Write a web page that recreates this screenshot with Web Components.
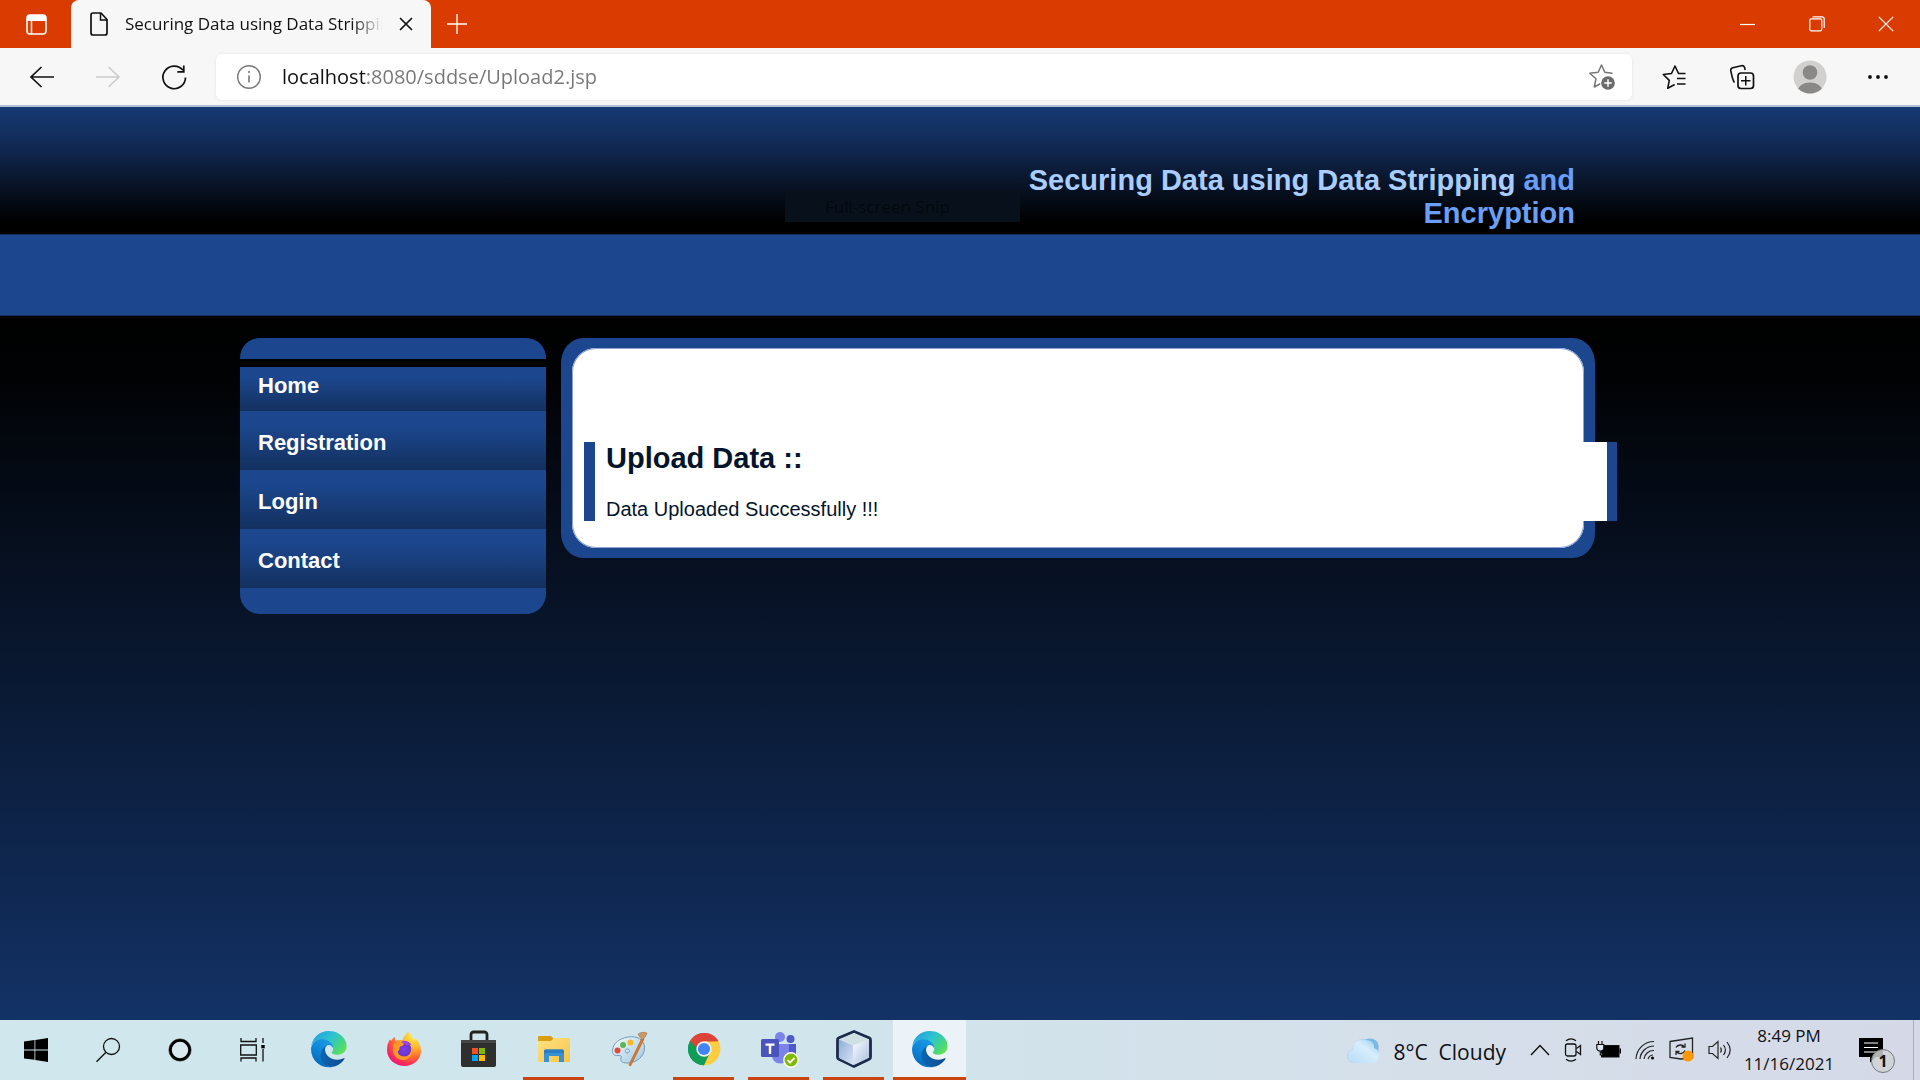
<!DOCTYPE html>
<html lang="en">
<head>
<meta charset="utf-8">
<title>Securing Data using Data Stripping and Encryption</title>
<style>
html,body{height:100%;margin:0}
body{font-family:"Open Sans","Noto Sans",sans-serif;background:#12305f;overflow:hidden}
</style>
</head>
<body>
<desktop-screen></desktop-screen>
<script>
const ICONS = {
  tabs:[24,24,`<rect x="3" y="3" width="19" height="19" rx="3" fill="none" stroke="#fff" stroke-width="1.6"/><path d="M3 9V6a3 3 0 0 1 3-3h13a3 3 0 0 1 3 3v3z" fill="#fff"/><path d="M7.500 9v13" stroke="#fff" stroke-width="1.500"/>`],
  page:[20,26,`<path d="M4 2h8l6 6.500V22a2 2 0 0 1-2 2H4a2 2 0 0 1-2-2V4a2 2 0 0 1 2-2z" fill="none" stroke="#111" stroke-width="1.700" stroke-linejoin="round"/><path d="M11.500 2v7H18" fill="none" stroke="#111" stroke-width="1.500"/>`],
  close:[14,14,`<path d="M1.500 1.500l11 11M12.500 1.500l-11 11" stroke="#111" stroke-width="1.700" stroke-linecap="round"/>`],
  plus:[22,22,`<path d="M11 1v20M1 11h20" stroke="#fff" stroke-width="1.300"/>`],
  min:[16,16,`<path d="M0 8.500h15" stroke="#fff" stroke-width="1.200"/>`],
  restore:[16,16,`<rect x=".8" y="2.800" width="12" height="12" rx="1.500" fill="none" stroke="#fff" stroke-width="1.200"/><path d="M3.500.8h9.500a2.200 2.200 0 0 1 2.200 2.200v9" fill="none" stroke="#fff" stroke-width="1.200"/>`],
  winclose:[16,16,`<path d="M.8.8l14.400 14.400M15.200.8L.8 15.200" stroke="#fff" stroke-width="1.200"/>`],
  back:[26,24,`<path d="M25 12H2M12.500 2L2 12l10.500 10" fill="none" stroke="#111" stroke-width="1.700"/>`],
  forward:[26,24,`<path d="M1 12h23M13.500 2L24 12 13.500 22" fill="none" stroke="#ccc" stroke-width="1.600"/>`],
  reload:[26,26,`<path d="M24.500 13.500A11.300 11.300 0 1 1 22 6.300M22.800 1.500v6.300h-6.500" fill="none" stroke="#111" stroke-width="1.700"/>`],
  info:[26,26,`<circle cx="13" cy="13" r="11.300" fill="none" stroke="#767676" stroke-width="1.400"/><path d="M13 11.500v7" stroke="#767676" stroke-width="1.600"/><circle cx="13" cy="8" r="1.100" fill="#767676"/>`],
  staradd:[28,28,`<path d="M24 10.200l-7.200-1L13.500 2l-3.300 7.200-8.400 1 6.200 5.500-1.700 8.300 5.500-3" fill="none" stroke="#767676" stroke-width="1.500" stroke-linejoin="round" stroke-linecap="round"/><circle cx="20" cy="20" r="6.800" fill="#6b6b6b"/><path d="M20 16.200v7.600M16.200 20h7.600" stroke="#fff" stroke-width="1.500"/>`],
  favs:[26,26,`<path d="M24.500 9.500h-7L14 2l-3.500 7.500-8.200 1 6 5.800-1.600 8 7-3.800" fill="none" stroke="#111" stroke-width="1.600" stroke-linejoin="round"/><path d="M16 14.500h8.500M16 20h8.500" stroke="#111" stroke-width="1.700"/>`],
  collections:[26,26,`<path d="M5.500 18.500C4 17.500 3 12.500 1.800 7c-.3-1.600.3-2.800 2-3.300l8.500-2c1.700-.4 2.700.3 3.200 1.600l.7 2.700" fill="none" stroke="#111" stroke-width="1.600"/><rect x="9" y="9" width="15.500" height="15.500" rx="3" fill="none" stroke="#111" stroke-width="1.700"/><path d="M16.750 12v9.500M12 16.750h9.500" stroke="#111" stroke-width="1.500"/>`],
  avatar:[34,34,`<clipPath id="a"><circle cx="17" cy="17" r="16.500"/></clipPath><circle cx="17" cy="17" r="16.500" fill="#d2d0ce"/><circle cx="17" cy="12.500" r="7.300" fill="#8a8886"/><path d="M3.500 34c1-8.500 7-11.500 13.500-11.500S29.500 25.500 30.500 34z" fill="#8a8886" clip-path="url(#a)"/>`],
  dots:[22,6,`<g fill="#111"><circle cx="3" cy="3" r="1.900"/><circle cx="11" cy="3" r="1.900"/><circle cx="19" cy="3" r="1.900"/></g>`],
  start:[24,24,`<path d="M0 3.500l10.500-1.500v9.500H0zM11.300 1.900L24 0v11.500H11.300zM0 12.400h10.500v9.400L0 20.400zM11.300 12.400H24V24l-12.700-1.900z" fill="#000"/>`],
  search:[24,24,`<circle cx="15.500" cy="8.500" r="8" fill="none" stroke="#111" stroke-width="1.300"/><path d="M10 14.200L.5 23.700" stroke="#111" stroke-width="1.500"/>`],
  cortana:[24,24,`<circle cx="12" cy="12" r="11.200" fill="none" stroke="#777" stroke-width="1" /><circle cx="12" cy="12" r="9.600" fill="#d9e9ef" stroke="#000" stroke-width="2.800"/>`],
  taskview:[25,24,`<path d="M1 0v3.500h15V0M1 23.500V20h15v3.500M.7 7h15.600v10H.7zM23 0v5M23 11v12.500" fill="none" stroke="#111" stroke-width="1.300"/><path d="M21.300 7h3.400v3.300h-3.400z"/>`],
  edge:[36,36,`<defs><linearGradient id="b" x1="0" y1="0" x2="1" y2="0"><stop offset=".1" stop-color="#0c62b0"/><stop offset="1" stop-color="#114a8b"/></linearGradient><linearGradient id="c" x1=".8" y1="0" x2=".3" y2="1"><stop offset="0" stop-color="#1b9de2"/><stop offset=".5" stop-color="#0f86d8"/><stop offset="1" stop-color="#0068b8"/></linearGradient><linearGradient id="d" x1="0" y1=".2" x2="1" y2=".8"><stop offset="0" stop-color="#249fe0"/><stop offset=".45" stop-color="#2dc3cf"/><stop offset=".75" stop-color="#43d487"/><stop offset="1" stop-color="#66e14e"/></linearGradient></defs><g transform="scale(.139)"><path fill="url(#b)" d="M235.680 195.460a93.730 93.730 0 0 1-10.540 4.710 101.870 101.870 0 0 1-35.900 6.460c-47.320 0-88.540-32.550-88.540-74.320A31.480 31.480 0 0 1 117.130 105.030c-42.800 1.800-53.800 46.400-53.800 72.530 0 73.880 68.090 81.370 82.760 81.370 7.910 0 19.840-2.300 27-4.560l1.310-.44a128.340 128.340 0 0 0 66.600-52.800 4 4 0 0 0-5.320-5.670z"/><path fill="url(#c)" d="M105.730 246.760a79.200 79.200 0 0 1-22.740-21.340 80.720 80.720 0 0 1 29.530-120c3.120-1.470 8.450-4.130 15.540-4a32.350 32.350 0 0 1 25.690 13 31.880 31.880 0 0 1 6.360 18.660c0-.21 24.460-79.600-80-79.600-43.900 0-80 41.660-80 78.210a130.150 130.150 0 0 0 12.110 56 128 128 0 0 0 156.380 67.110 75.550 75.550 0 0 1-62.780-8z"/><path fill="url(#d)" d="M152.330 148.860c-.81 1.050-3.300 2.500-3.300 5.660 0 2.610 1.700 5.120 4.720 7.230 14.380 10 41.490 8.680 41.560 8.680a59.560 59.560 0 0 0 30.270-8.350 61.380 61.380 0 0 0 30.430-52.880c.26-22.410-8-37.310-11.340-43.910C223.460 23.840 177.720 0 128 0A128 128 0 0 0 0 126.200c.48-36.540 36.800-66.050 80-66.050 3.500 0 23.460.34 42 10.070 16.340 8.580 24.900 18.940 30.850 29.210 6.180 10.670 7.280 24.150 7.280 29.520s-2.740 13.330-7.800 19.910z"/></g>`],
  firefox:[36,36,`<defs><radialGradient id="e" cx=".8" cy=".1" r="1.050"><stop offset="0" stop-color="#fff44f"/><stop offset=".35" stop-color="#ffb52b"/><stop offset=".6" stop-color="#ff6a2f"/><stop offset=".85" stop-color="#f8255f"/><stop offset="1" stop-color="#e31587"/></radialGradient><radialGradient id="f"><stop offset="0" stop-color="#7c3ce8"/><stop offset="1" stop-color="#6a34c8"/></radialGradient></defs><path d="M22 1c3 2.500 5 5.500 5.500 8.500 1-1 1.500-1.500 1.500-3 4 4 6 8.500 6 13.500C35 28.500 27.500 35 18.500 35 9 35 1 28 1 19c0-4.500 1.200-8 3-10.500l1.500 1.500C6 8.500 7 7 8.500 6l1 4c2-1 4.500-1 7-.8C17.500 6 19.500 3 22 1z" fill="url(#e)"/><circle cx="18" cy="18.500" r="7.300" fill="url(#f)"/><path d="M8 13c4-3 10-1 10 0s-2 2.300-4 2.500c-1 2 0 4-2 4.500-1 3 3 6 7 5.500 5-.5 7-5 5.500-9 4 6-1 13-8 12.500C8 28.500 5 20 8 13z" fill="#ff9a24"/><path d="M15 10c4-1 9 .5 10.500 4l-6 0c-1-2-2.500-3-4.500-4z" fill="#9b45dc"/>`],
  store:[36,36,`<path d="M10 10V3.500A2.500 2.500 0 0 1 12.500 1h11A2.500 2.500 0 0 1 26 3.500V10" fill="none" stroke="#222" stroke-width="2.800"/><path d="M0 9h35v25a2 2 0 0 1-2 2H2a2 2 0 0 1-2-2z" fill="#2f2f2f"/><path d="M0 9h35v3H0z" fill="#444"/><path d="M11 17h6v6h-6z" fill="#f25022"/><path d="M18 17h6v6h-6z" fill="#7fba00"/><path d="M11 24h6v6h-6z" fill="#00a4ef"/><path d="M18 24h6v6h-6z" fill="#ffb900"/>`],
  explorer:[34,30,`<defs><linearGradient id="g" x1="0" y1="0" x2="1" y2="1"><stop offset="0" stop-color="#ffe185"/><stop offset="1" stop-color="#f7c548"/></linearGradient></defs><path d="M1 6V3a1 1 0 0 1 1-1h12l2 2v3H1z" fill="#d89f10"/><path d="M1 7h13l3-3h15a1 1 0 0 1 1 1v22a1 1 0 0 1-1 1H2a1 1 0 0 1-1-1z" fill="url(#g)"/><path d="M7 28V17a1.500 1.500 0 0 1 1.500-1.500h17A1.500 1.500 0 0 1 27 17v11h-5v-6H12v6z" fill="#3a91d0"/><path d="M7 22v-5a1.500 1.500 0 0 1 1.500-1.500h17A1.500 1.500 0 0 1 27 17v2H8z" fill="#2a7fc4"/>`],
  paint:[36,36,`<defs><linearGradient id="h" x1="0" y1="0" x2="1" y2="1"><stop offset="0" stop-color="#f3f9fd"/><stop offset="1" stop-color="#9dc8e4"/></linearGradient></defs><path d="M17 6c9-1.500 16 2.500 16.500 10C34 25 26 32 16 32c-5 0-7-2-6-5 .8-2-.5-3-3-2.500C3 25 1 23 1.500 19 2.200 12.500 8 7.500 17 6zm-1 12c-2 .3-2.500 3.800 0 4s4-4 0-4z" fill="url(#h)" stroke="#7b9bb0" stroke-width="1"/><circle cx="6.500" cy="19.500" r="3" fill="#e04a38"/><circle cx="12" cy="14" r="2.900" fill="#59b64d"/><circle cx="19.500" cy="11.500" r="3" fill="#f3b928"/><path d="M31 7l2 1-13.500 27-1.500-1z" fill="#e47b24" stroke="#b65b18" stroke-width=".7"/><path d="M27 3c3-2 6-2 9-1-1 3-2 5-5 7-1-2-2.500-3-4-6z" fill="#c79a6c" stroke="#97683f" stroke-width=".5"/>`],
  chrome:[34,34,`<path d="M17 17L3.100 9A16.300 16.300 0 0 1 31.300 9z" fill="#db4437"/><path d="M17 17L31.300 9A16.300 16.300 0 0 1 17 33.300z" fill="#ffcd40"/><path d="M17 17v16.300A16.300 16.300 0 0 1 3.100 9z" fill="#0f9d58"/><path d="M17 9.300h14.400a16 16 0 0 1 1.500 4l-9 3.500z" fill="#ffcd40"/><path d="M3 9.100L10.500 21l6.500 3.700 5-2L17 33.300A16.300 16.300 0 0 1 3 9.100z" fill="#0f9d58"/><path d="M3.100 9A16.300 16.300 0 0 1 31.400 9.300H17c-4 0-7 2.500-7.600 6.500z" fill="#db4437"/><circle cx="17" cy="17" r="7.700" fill="#f1f1f1"/><circle cx="17" cy="17" r="6.100" fill="#4285f4"/>`],
  teams:[40,38,`<circle cx="21" cy="7" r="5" fill="#7b83eb"/><circle cx="31.500" cy="9" r="4" fill="#5059c9"/><path d="M26 14h11v11c0 4-3 7-7 7z" fill="#5059c9"/><path d="M13 14h17v11c0 5-3.500 8.500-8.500 8.500S13 30 13 25z" fill="#7b83eb"/><rect x="2" y="9" width="18" height="18" rx="1.500" fill="#4b53bc"/><path d="M6.500 13.500h9v2.200h-3.300V24H9.800v-8.300H6.500z" fill="#fff"/><circle cx="32" cy="30" r="7.900" fill="#fff"/><circle cx="32" cy="30" r="6.500" fill="#7fba00"/><path d="M28.500 30l2.500 2.700 4.500-4.900" fill="none" stroke="#fff" stroke-width="1.800"/>`],
  netbeans:[36,38,`<defs><linearGradient id="i" x1="0" y1="0" x2="1" y2="1"><stop offset="0" stop-color="#8fadd8"/><stop offset="1" stop-color="#d9e4f5"/></linearGradient><linearGradient id="j" x1="0" y1="0" x2="1" y2="1"><stop offset="0" stop-color="#fbfcff"/><stop offset="1" stop-color="#a9bfe0"/></linearGradient></defs><path d="M18 1.500l15.500 6.500a2 2 0 0 1 1 2v17a2 2 0 0 1-1 2L18 36.500 2.500 29a2 2 0 0 1-1-2V10a2 2 0 0 1 1-2z" fill="#dbe6ee" stroke="#1b2b4b" stroke-width="2.800"/><path d="M3 9.500l14 6V35L3 28z" fill="url(#i)"/><path d="M33 9.500l-16 6V35l16-7.500z" fill="url(#j)"/><path d="M18 3L4 9.500l13 5.500 15-5.500z" fill="#cfe0e2"/>`],
  cloud:[34,28,`<defs><linearGradient id="k" x1="1" y1="0" x2="0" y2="1"><stop offset="0" stop-color="#8cc8f0"/><stop offset=".4" stop-color="#d8eefc"/><stop offset="1" stop-color="#b5dcf6"/></linearGradient></defs><path d="M8 27a7 7 0 0 1-1.500-13.800C8 5 14 2 19.500 3.500 27 .5 34 5 32.500 13c.5 8-3 14-8 14z" fill="#7bb8e3"/><path d="M8 27a7 7 0 0 1-1.500-13.800C8 5 14 1.500 20 4c7 1 8.500 4 8 8 5 1.500 6 5 4.500 9s-3 6-7 6z" fill="url(#k)"/>`],
  chevron:[20,12,`<path d="M1 11l9-9.500 9 9.500" fill="none" stroke="#111" stroke-width="1.400"/>`],
  camera:[18,24,`<rect x="1.500" y="6" width="10.500" height="12" rx="2" fill="none" stroke="#111" stroke-width="1.300"/><path d="M12.500 10.500l4-3v9l-4-3M2 2.800c3-2.300 7-2.300 10 0M2 21.200c3 2.300 7 2.300 10 0" fill="none" stroke="#111" stroke-width="1.300"/>`],
  battery:[25,18,`<rect x="5.500" y="4.500" width="17.500" height="11.500" fill="#000" stroke="#111" stroke-width="1"/><path d="M23.500 7.500h1.500v5h-1.500z"/><path d="M2.500 0v4M6 0v4M.8 3.500h7V7c0 2-1.500 3-3.500 3S.8 9 .8 7zM4.300 10v4H6" fill="#dbe3ec" stroke="#111" stroke-width="1.200"/>`],
  wifi:[20,20,`<g fill="none" stroke="#222" stroke-width="1.200"><path d="M1 19A18 18 0 0 1 19 1.500M5 19A14 14 0 0 1 19 6M9 19a9.500 9.500 0 0 1 10-8.500"/></g><path d="M13 19a6 6 0 0 1 5-4" fill="none" stroke="#222" stroke-width="1.200"/><circle cx="17.500" cy="18" r="1.500"/>`],
  sync:[25,26,`<path d="M1 4.500L23.500 1v20L12 22 1 20.500z" fill="none" stroke="#222" stroke-width="1.300"/><path d="M7 10.500c1.500-3 6.500-3.500 8.500-.5M16 6.500V10h-3.500M16 13.500c-1.500 3.500-6 4-8.500 1.500M7 18v-3.500h3.500" fill="none" stroke="#222" stroke-width="1.300"/><circle cx="19" cy="19" r="5.500" fill="#ff9800"/>`],
  speaker:[24,20,`<path d="M1 6.500h3.500L10 1.500v17l-5.500-5H1z" fill="none" stroke="#222" stroke-width="1.200"/><path d="M12.500 7.500c1 1.500 1 3.500 0 5M15.500 5c2.300 3 2.300 7 0 10M19 2c4 5 4 11 0 16" fill="none" stroke="#222" stroke-width="1.200"/>`],
  note:[24,24,`<path d="M0 0h24v19h-7l-6 5.500V19H0z"/><path d="M5 5h14M5 9.500h14M5 14h14" stroke="#fff" stroke-width="1.200"/>`]
};
class AppIcon extends HTMLElement{
  connectedCallback(){
    const [w,h,body]=ICONS[this.getAttribute('name')];
    if(!this.shadowRoot) this.attachShadow({mode:'open'}).innerHTML=
      `<style>:host{display:inline-flex;flex:none}svg{display:block;overflow:visible}</style><svg width="${w}" height="${h}" viewBox="0 0 ${w} ${h}" aria-hidden="true">${body}</svg>`;
  }
}
const define=(name,html)=>customElements.define(name,class extends HTMLElement{
  constructor(){super();const t=document.createElement('template');t.innerHTML=html;this.attachShadow({mode:'open'}).append(t.content.cloneNode(true));}
});
customElements.define('app-icon',AppIcon);
const btn=`button{all:unset;box-sizing:border-box;display:flex;align-items:center;justify-content:center;flex:none}`;

define('browser-tabs',`<style>
:host{display:flex;height:48px;background:#da3b01;align-items:stretch}${btn}
.ws{width:71px}
.tab{width:360px;box-sizing:border-box;background:#f7f7f7;border-radius:8px 8px 0 0;display:flex;align-items:center;padding:0 18px 0 18px;gap:16px}
.t{flex:1;overflow:hidden;white-space:nowrap;font-size:17px;line-height:24px;color:#111;-webkit-mask-image:linear-gradient(90deg,#000 88%,transparent)}
.new{width:52px}.win{margin-left:auto;display:flex}.win button{width:69px}
</style>
<button class="ws" aria-label="Tab actions"><app-icon name="tabs"></app-icon></button>
<div class="tab"><app-icon name="page"></app-icon><span class="t"><slot></slot></span><button aria-label="Close tab"><app-icon name="close"></app-icon></button></div>
<button class="new" aria-label="New tab"><app-icon name="plus"></app-icon></button>
<div class="win"><button aria-label="Minimize"><app-icon name="min"></app-icon></button><button aria-label="Restore"><app-icon name="restore"></app-icon></button><button aria-label="Close"><app-icon name="winclose"></app-icon></button></div>`);

define('browser-toolbar',`<style>
:host{display:flex;height:57px;background:#f7f7f7;align-items:center;border-bottom:2px solid #b0bed2;padding-left:9px}${btn}
.nav,.act{width:66px;height:44px}.act{width:68px}
.bar{flex:1;height:46px;margin-left:9px;background:#fff;border-radius:6px;box-shadow:0 0 3px #e0e0e0;display:flex;align-items:center;padding:0 16px 0 20px;gap:20px}
input{flex:1;min-width:0;border:0;outline:0;padding:0;height:30px;font:20px/30px "Open Sans","Noto Sans",sans-serif;color:#767676;-webkit-text-fill-color:transparent;background:linear-gradient(90deg,#111 84px,#767676 84px);-webkit-background-clip:text;background-clip:text}
.r{display:flex;margin-left:8px;padding-right:8px}
</style>
<button class="nav" aria-label="Back"><app-icon name="back"></app-icon></button><button class="nav" aria-label="Forward"><app-icon name="forward"></app-icon></button><button class="nav" aria-label="Refresh"><app-icon name="reload"></app-icon></button>
<div class="bar"><app-icon name="info"></app-icon><input aria-label="Address" value="localhost:8080/sddse/Upload2.jsp"><button aria-label="Add favorite"><app-icon name="staradd"></app-icon></button></div>
<div class="r"><button class="act" aria-label="Favorites"><app-icon name="favs"></app-icon></button><button class="act" aria-label="Collections"><app-icon name="collections"></app-icon></button><button class="act" aria-label="Profile"><app-icon name="avatar"></app-icon></button><button class="act" aria-label="Settings"><app-icon name="dots"></app-icon></button></div>`);

define('snip-tooltip',`<style>
:host{position:absolute;left:785px;top:83px;width:235px;height:32px;box-sizing:border-box;padding-left:40px;background:#08111b;color:#030810;font:17px/34px "Open Sans","Noto Sans",sans-serif}
</style><slot></slot>`);

define('site-header',`<style>
:host{display:block;position:relative}
.top{height:127px;box-sizing:border-box;background:linear-gradient(#163a74,#122d5b 25%,#081326 62%,#000 90%);padding-top:57px}
.in{max-width:1440px;margin:0 auto;box-sizing:border-box;padding-right:105px;display:flex;justify-content:flex-end}
h1{margin:0;max-width:610px;text-align:right;font-size:29px;line-height:33px;color:#a9cdff}
h1 ::slotted(span){color:#6a9ff5}
.band{height:82px;box-sizing:border-box;background:#1c478e;border:solid #12305f;border-width:1px 0}
</style>
<div class="top"><div class="in"><h1><slot></slot></h1></div></div><div class="band"></div><slot name="overlay"></slot>`);

define('menu-link',`<style>
:host{display:block}
a{display:block;height:59px;box-sizing:border-box;padding:0 18px;font-size:22px;font-weight:bold;line-height:64px;color:#fff;text-decoration:none;background:linear-gradient(#1c478e 25%,#13305e)}
:host([first]) a{height:44px;line-height:37px}
</style><a href="#"><slot></slot></a>`);

define('side-menu',`<style>
:host{display:block;flex:0 0 306px}
.cap{height:21px;background:#1c478e;border-radius:20px 20px 0 0;margin-bottom:8px}
.foot{height:26px;background:#1c478e;border-radius:0 0 20px 20px}
</style><div class="cap"></div><nav><slot></slot></nav><div class="foot"></div>`);

define('content-panel',`<style>
:host{display:block;flex:1;align-self:flex-start;background:#1c478e;border-radius:22px/25px;padding:10px 11px}
.white{background:#fff;border-radius:24px;padding:94px 0 27px 12px;box-shadow:0 0 0 1px #8ea3cf inset}
.box{margin-right:-33px;background:#fff;border:solid #1c478e;border-width:0 10px 0 11px;padding:0 11px;color:#04142b}
h2{margin:0 0 23px;font-size:29px;line-height:32px}
p{margin:0;font-size:20px;line-height:24px}
</style><div class="white"><div class="box"><h2><slot name="title"></slot></h2><p><slot></slot></p></div></div>`);

define('task-bar',`<style>
:host{display:flex;height:60px;background:linear-gradient(90deg,#d0e7ee,#d0e5ec 40%,#d5dfea 75%,#d5d9e7);color:#111}${btn}
.sys button{width:72px}.sys,.apps,.tray{display:flex}.apps{margin-left:3px}
.apps button{width:75px;position:relative;padding-bottom:2px}
.apps .run::after{content:"";position:absolute;left:7px;right:7px;bottom:0;height:3px;background:#ca4410}
.apps .on{background:#ecf3f8;width:73px;margin-left:2px}.apps .on::after{left:0;right:0}
.tray{margin-left:auto;align-items:center}
.weather{gap:13px;font-size:21px;line-height:30px;margin-right:24px}
.weather span{white-space:pre;padding-top:4px}
.icons{display:flex;align-items:center;gap:14px}
.clock{width:112px;margin-left:1px;flex-direction:column;font-size:17px;line-height:28px}
.note{position:relative;margin:0 30px 0 14px}
.note b{position:absolute;left:12px;top:11px;width:24px;height:24px;box-sizing:border-box;border:1px solid #777;border-radius:50%;background:#cfd2d6d9;font:bold 16px/22px "Open Sans",sans-serif;text-align:center}
.desk{width:7px;height:60px;border-left:1px solid #a9afbb}
</style>
<div class="sys"><button aria-label="Start"><app-icon name="start"></app-icon></button><button aria-label="Search"><app-icon name="search"></app-icon></button><button aria-label="Cortana"><app-icon name="cortana"></app-icon></button><button aria-label="Task view"><app-icon name="taskview"></app-icon></button></div>
<div class="apps"><button aria-label="Edge"><app-icon name="edge"></app-icon></button><button aria-label="Firefox"><app-icon name="firefox"></app-icon></button><button aria-label="Store"><app-icon name="store"></app-icon></button><button class="run" aria-label="Explorer"><app-icon name="explorer"></app-icon></button><button aria-label="Paint"><app-icon name="paint"></app-icon></button><button class="run" aria-label="Chrome"><app-icon name="chrome"></app-icon></button><button class="run" aria-label="Teams"><app-icon name="teams"></app-icon></button><button class="run" aria-label="NetBeans"><app-icon name="netbeans"></app-icon></button><button class="run on" aria-label="Edge window"><app-icon name="edge"></app-icon></button></div>
<div class="tray"><button class="weather"><app-icon name="cloud"></app-icon><span>8°C  Cloudy</span></button>
<div class="icons"><app-icon name="chevron"></app-icon><app-icon name="camera"></app-icon><app-icon name="battery"></app-icon><app-icon name="wifi"></app-icon><app-icon name="sync"></app-icon><app-icon name="speaker"></app-icon></div>
<button class="clock"><span>8:49 PM</span><span>11/16/2021</span></button>
<button class="note" aria-label="Notifications"><app-icon name="note"></app-icon><b>1</b></button><button class="desk" aria-label="Show desktop"></button></div>`);

define('desktop-screen',`<style>
:host{display:flex;flex-direction:column;height:100vh;min-height:700px}
.view{flex:1;font-family:"Liberation Sans",Arial,sans-serif;display:flex;flex-direction:column}
main{flex:1;background:linear-gradient(#000,#010204 8%,#133266)}
.cols{max-width:1440px;margin:0 auto;box-sizing:border-box;padding:22px 85px 0 0;display:flex;gap:15px}
</style>
<browser-tabs>Securing Data using Data Stripping and Encryption</browser-tabs>
<browser-toolbar></browser-toolbar>
<div class="view">
<site-header>Securing Data using Data Stripping <span>and</span> <span>Encryption</span><snip-tooltip slot="overlay">Full-screen Snip</snip-tooltip></site-header>
<main><div class="cols">
<side-menu><menu-link first>Home</menu-link><menu-link>Registration</menu-link><menu-link>Login</menu-link><menu-link>Contact</menu-link></side-menu>
<content-panel><span slot="title">Upload Data ::</span>Data Uploaded Successfully !!!</content-panel>
</div></main></div>
<task-bar></task-bar>`);
</script>
</body>
</html>
